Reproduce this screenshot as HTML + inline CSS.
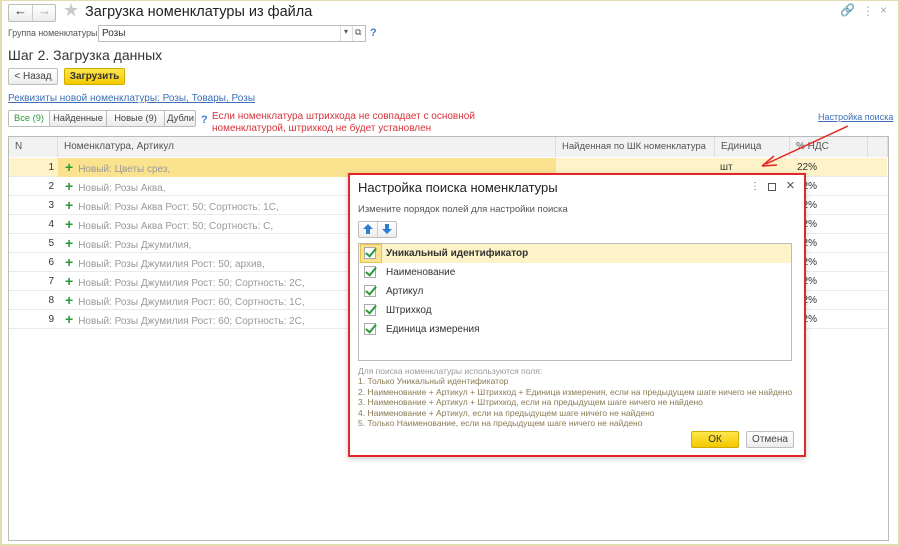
<!DOCTYPE html>
<html><head><meta charset="utf-8"><style>
*{box-sizing:border-box}
body{margin:0;width:900px;height:546px;overflow:hidden;font-family:"Liberation Sans",Arial,sans-serif;font-size:10px;color:#333;background:#fff;position:relative}
.a{position:absolute;white-space:nowrap}
.frame{left:0;top:0;width:900px;height:546px;border:2px solid #e2dcb0;border-top:1px solid #e2dcb0}
.btn{position:absolute;border:1px solid #bdbdbd;border-radius:2px;background:linear-gradient(#fff,#ececec);text-align:center;line-height:18px;color:#444;white-space:nowrap}
.link{color:#3d6fb6;text-decoration:underline}
.row{position:absolute;left:9px;width:878px;height:19px;border-bottom:1px solid #eaeaea}
.row .n{position:absolute;left:0;width:45px;text-align:right;line-height:19px;color:#333}
.row .t{position:absolute;left:56px;line-height:19px;color:#999;white-space:nowrap}
.row .t b{color:#2a9a3a;font-size:14px;margin-right:5px;font-weight:bold}
.row .p{position:absolute;left:788px;line-height:19px}
.hd{position:absolute;top:137px;height:20px;line-height:20px;color:#555;padding-left:6px;border-right:1px solid #ddd;background:#f2f2f2;white-space:nowrap;overflow:hidden}
.cb{position:absolute;left:9px;width:12px;height:12px;border:1px solid #aaa;background:#fff}
.cb:after{content:"";position:absolute;left:3px;top:-2px;width:4px;height:9px;border:solid #2a9a3a;border-width:0 2px 2px 0;transform:rotate(40deg)}
.it{position:absolute;left:0;width:432px;height:19px;line-height:19px}
.it span{position:absolute;left:27px}
</style></head><body>
<div class="a frame"></div>
<div class="btn" style="left:8px;top:4px;width:48px;height:18px"></div>
<div class="a" style="left:32px;top:5px;width:1px;height:16px;background:#ccc"></div>
<div class="a" style="left:14px;top:3px;font-size:13px;color:#333">&#8592;</div>
<div class="a" style="left:38px;top:3px;font-size:13px;color:#aaa">&#8594;</div>
<div class="a" style="left:63px;top:0px;font-size:18px;color:#c8c8c8">&#9733;</div>
<div class="a" style="left:85px;top:4px;font-size:14.5px;color:#222">Загрузка номенклатуры из файла</div>
<div class="a" style="left:840px;top:3px;color:#ccc;font-size:12px">&#128279;</div>
<div class="a" style="left:862px;top:4px;color:#aaa;font-size:12px">&#8942;</div>
<div class="a" style="left:880px;top:3px;color:#aaa;font-size:12px">&#215;</div>
<div class="a" style="left:8px;top:28px;color:#555;font-size:8.8px">Группа номенклатуры:</div>
<div class="a" style="left:98px;top:25px;width:268px;height:17px;border:1px solid #bbb;background:#fff;padding-left:3px;line-height:15px">Розы</div>
<div class="a" style="left:340px;top:26px;width:1px;height:15px;background:#ddd"></div>
<div class="a" style="left:344px;top:27px;font-size:8px;color:#555">▾</div>
<div class="a" style="left:352px;top:26px;width:1px;height:15px;background:#ddd"></div>
<div class="a" style="left:355px;top:27px;font-size:9px;color:#555">⧉</div>
<div class="a" style="left:370px;top:27px;color:#3d80c8;font-weight:bold;font-size:11px">?</div>
<div class="a" style="left:8px;top:47px;font-size:14px;color:#333">Шаг 2. Загрузка данных</div>
<div class="btn" style="left:8px;top:68px;width:50px;height:17px;line-height:15px">&lt; Назад</div>
<div class="btn" style="left:64px;top:68px;width:61px;height:17px;line-height:15px;background:linear-gradient(#ffe74a,#f3c800);border-color:#cfac00;color:#333;font-weight:bold">Загрузить</div>
<div class="a link" style="left:8px;top:93px">Реквизиты новой номенклатуры: Розы, Товары, Розы</div>
<div class="a" style="left:8px;top:110px;width:188px;height:17px;border:1px solid #bbb;border-radius:2px;background:linear-gradient(#fff,#ebebeb);line-height:15px;color:#444;font-size:9.3px">
<span class="a" style="left:0;width:40px;height:15px;background:#fff;text-align:center;color:#2a9a3a">Все (9)</span>
<span class="a" style="left:40px;width:1px;height:15px;background:#bbb"></span>
<span class="a" style="left:41px;width:56px;text-align:center">Найденные</span>
<span class="a" style="left:97px;width:1px;height:15px;background:#bbb"></span>
<span class="a" style="left:98px;width:57px;text-align:center">Новые (9)</span>
<span class="a" style="left:155px;width:1px;height:15px;background:#bbb"></span>
<span class="a" style="left:156px;width:31px;text-align:center">Дубли</span>
</div>
<div class="a" style="left:201px;top:114px;color:#3d80c8;font-weight:bold;font-size:11px">?</div>
<div class="a" style="left:212px;top:111px;color:#d6333c;line-height:12px">Если номенклатура штрихкода не совпадает с основной<br>номенклатурой, штрихкод не будет установлен</div>
<div class="a link" style="left:818px;top:112px;font-size:9px">Настройка поиска</div>
<div class="a" style="left:8px;top:136px;width:881px;height:405px;border:1px solid #bbb"></div>
<div class="hd" style="left:9px;width:49px">N</div>
<div class="hd" style="left:58px;width:498px">Номенклатура, Артикул</div>
<div class="hd" style="left:556px;width:159px;font-size:9.5px">Найденная по ШК номенклатура</div>
<div class="hd" style="left:715px;width:75px">Единица</div>
<div class="hd" style="left:790px;width:78px">% НДС</div>
<div class="hd" style="left:868px;width:20px"></div>
<div class="row" style="top:158px;background:#fdf2c8"><div class="a" style="left:49px;width:498px;height:19px;background:#fbe28e"></div><div class="n">1</div><div class="t"><b>+</b>Новый: Цветы срез,</div><div class="a" style="left:711px;line-height:19px">шт</div><div class="p">22%</div></div>
<div class="row" style="top:177px"><div class="n">2</div><div class="t"><b>+</b>Новый: Розы Аква,</div><div class="p">22%</div></div>
<div class="row" style="top:196px"><div class="n">3</div><div class="t"><b>+</b>Новый: Розы Аква Рост: 50; Сортность: 1С,</div><div class="p">22%</div></div>
<div class="row" style="top:215px"><div class="n">4</div><div class="t"><b>+</b>Новый: Розы Аква Рост: 50; Сортность: С,</div><div class="p">22%</div></div>
<div class="row" style="top:234px"><div class="n">5</div><div class="t"><b>+</b>Новый: Розы Джумилия,</div><div class="p">22%</div></div>
<div class="row" style="top:253px"><div class="n">6</div><div class="t"><b>+</b>Новый: Розы Джумилия Рост: 50; архив,</div><div class="p">22%</div></div>
<div class="row" style="top:272px"><div class="n">7</div><div class="t"><b>+</b>Новый: Розы Джумилия Рост: 50; Сортность: 2С,</div><div class="p">22%</div></div>
<div class="row" style="top:291px"><div class="n">8</div><div class="t"><b>+</b>Новый: Розы Джумилия Рост: 60; Сортность: 1С,</div><div class="p">22%</div></div>
<div class="row" style="top:310px"><div class="n">9</div><div class="t"><b>+</b>Новый: Розы Джумилия Рост: 60; Сортность: 2С,</div><div class="p">22%</div></div>
<svg class="a" style="left:750px;top:120px" width="110" height="50"><line x1="98" y1="6" x2="16" y2="44" stroke="#e52420" stroke-width="1.5"/><path d="M12 46 L24 36 M12 46 L27 45" stroke="#e52420" stroke-width="1.5" fill="none"/></svg>
<div class="a" style="left:348px;top:173px;width:458px;height:284px;border:2px solid #e3262a;background:#fff;box-shadow:0 2px 6px rgba(0,0,0,.2)">
<div class="a" style="left:8px;top:5px;font-size:13px;color:#222">Настройка поиска номенклатуры</div>
<div class="a" style="left:400px;top:6px;color:#666">&#8942;</div>
<div class="a" style="left:418px;top:8px;width:8px;height:8px;border:1px solid #555"></div>
<div class="a" style="left:436px;top:2px;font-size:15px;color:#555">&#215;</div>
<div class="a" style="left:8px;top:29px;color:#555;font-size:9.5px">Измените порядок полей для настройки поиска</div>
<div class="btn" style="left:8px;top:46px;width:39px;height:17px"></div>
<div class="a" style="left:27px;top:47px;width:1px;height:15px;background:#ccc"></div>
<svg class="a" style="left:13px;top:49px" width="10" height="11"><path d="M5 0 L10 5 L7 5 L7 10 L3 10 L3 5 L0 5Z" fill="#2a7fd4"/></svg>
<svg class="a" style="left:32px;top:49px" width="10" height="11"><path d="M5 10 L10 5 L7 5 L7 0 L3 0 L3 5 L0 5Z" fill="#2a7fd4"/></svg>
<div class="a" style="left:8px;top:68px;width:434px;height:118px;border:1px solid #bbb">
<div class="it" style="top:0;background:#fdf2c8;font-weight:bold;color:#333"><div class="a" style="left:1px;top:0;width:22px;height:19px;border:1px solid #e8c34a;background:#fbe28e"></div><div class="cb" style="left:5px;top:3px"></div><span>Уникальный идентификатор</span></div>
<div class="it" style="top:19px"><div class="cb" style="left:5px;top:3px"></div><span>Наименование</span></div>
<div class="it" style="top:38px"><div class="cb" style="left:5px;top:3px"></div><span>Артикул</span></div>
<div class="it" style="top:57px"><div class="cb" style="left:5px;top:3px"></div><span>Штрихкод</span></div>
<div class="it" style="top:76px"><div class="cb" style="left:5px;top:3px"></div><span>Единица измерения</span></div>
</div>
<div class="a" style="left:8px;top:191px;color:#999;font-size:8.5px;line-height:10.4px">Для поиска номенклатуры используются поля:<br><span style="color:#8a7a55">1. Только Уникальный идентификатор<br>2. Наименование + Артикул + Штрихкод + Единица измерения, если на предыдущем шаге ничего не найдено<br>3. Наименование + Артикул + Штрихкод, если на предыдущем шаге ничего не найдено<br>4. Наименование + Артикул, если на предыдущем шаге ничего не найдено<br>5. Только Наименование, если на предыдущем шаге ничего не найдено</span></div>
<div class="btn" style="left:341px;top:256px;width:48px;height:17px;line-height:15px;background:linear-gradient(#ffe74a,#f3c800);border-color:#cfac00;color:#333">ОК</div>
<div class="btn" style="left:396px;top:256px;width:48px;height:17px;line-height:15px">Отмена</div>
</div>
</body></html>
